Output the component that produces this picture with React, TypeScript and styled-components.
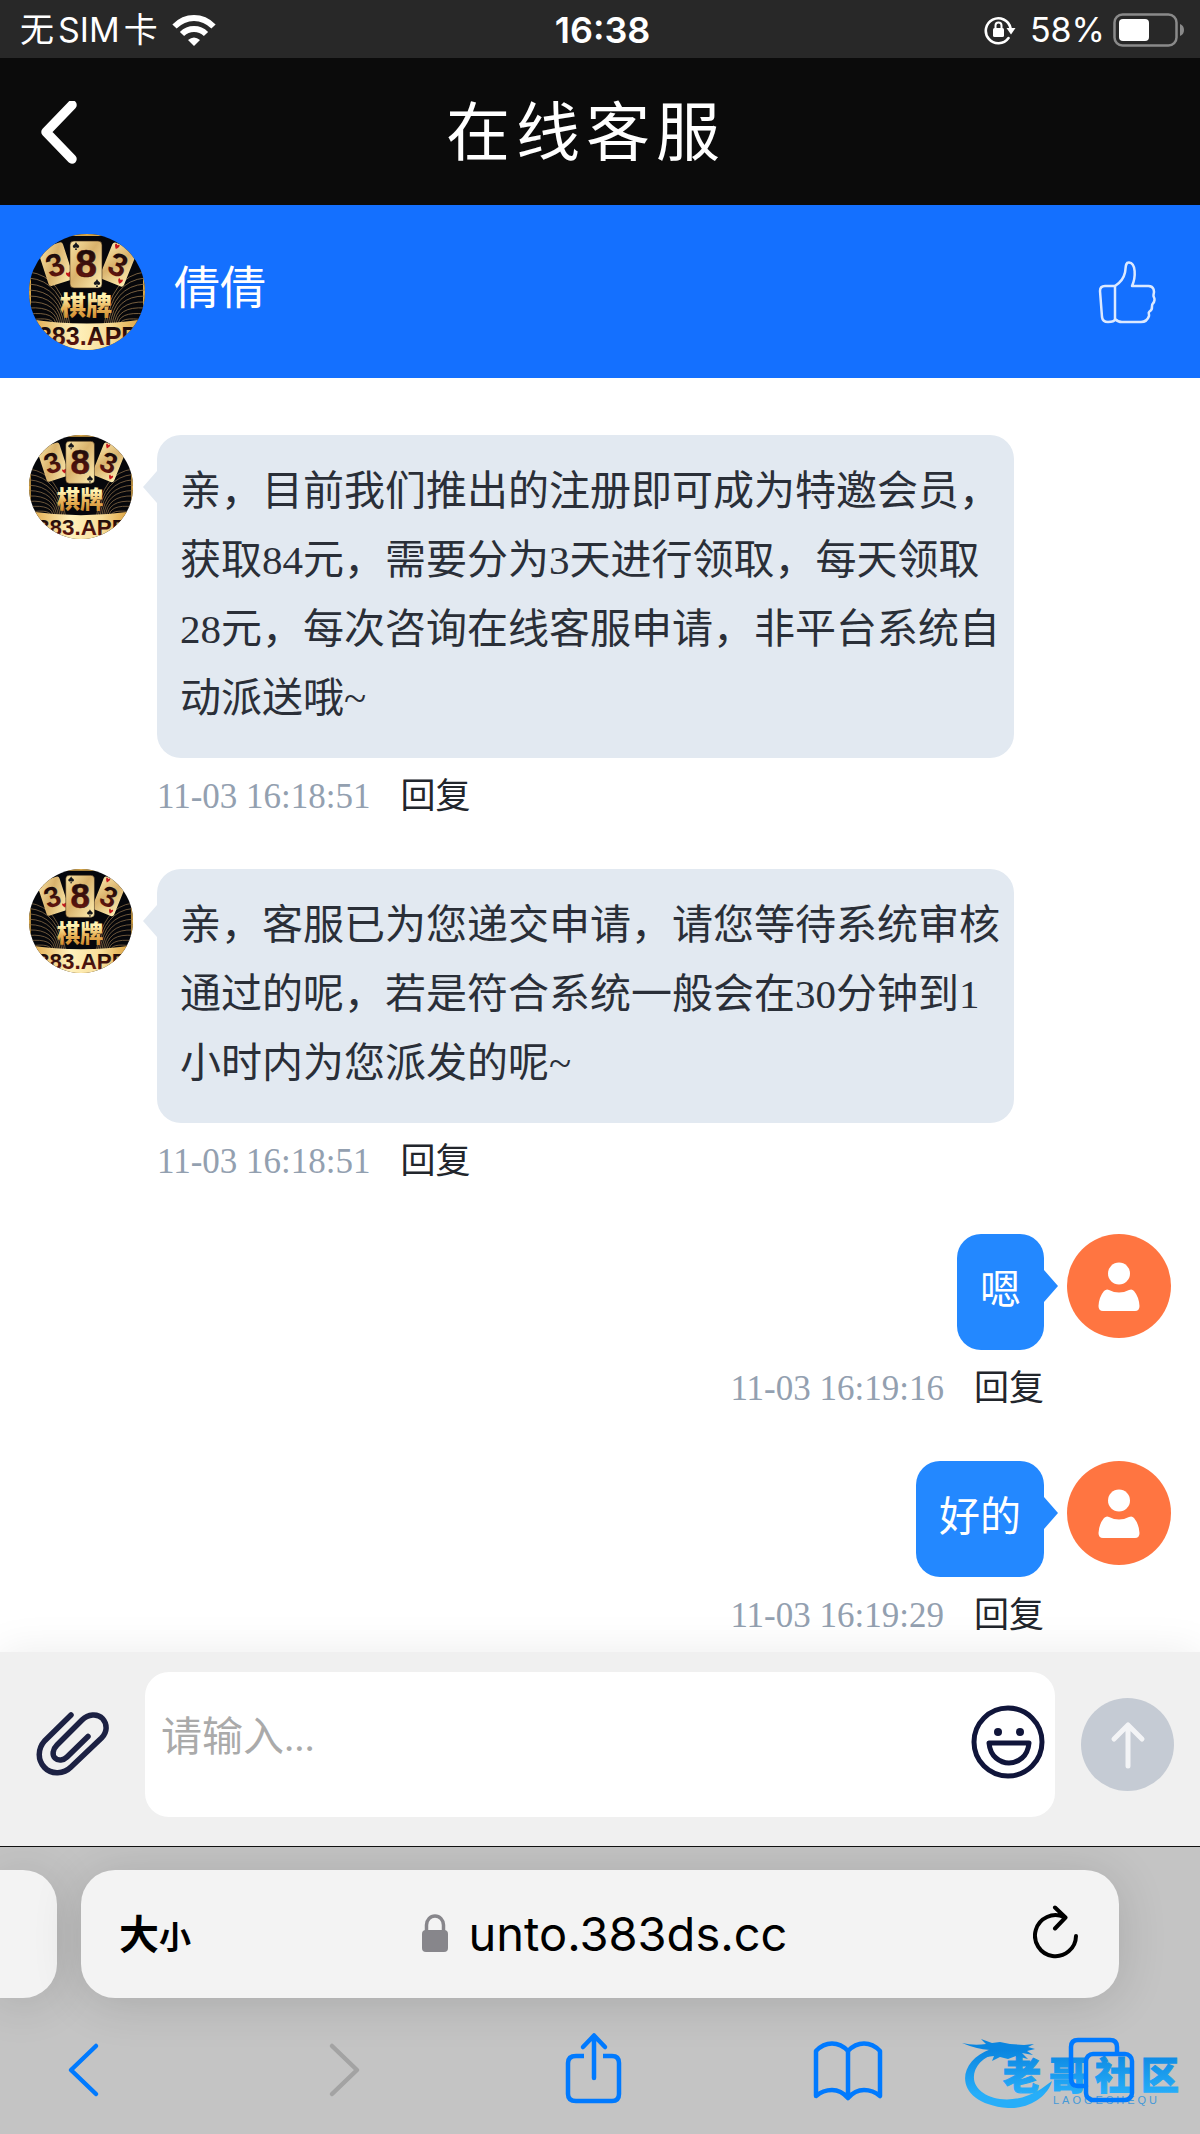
import React from "react";
import styled, { createGlobalStyle } from "styled-components";

const uiFont = `Inter, "Noto Sans CJK SC", sans-serif`;
const pageFont = `"Liberation Serif", "Noto Sans CJK SC", serif`;

const GlobalStyle = createGlobalStyle`
  *, *::before, *::after { box-sizing: border-box; }
  body { margin: 0; background: #fff; }
  button, textarea { font: inherit; color: inherit; }
`;

const Page = styled.div`
  display: flex;
  flex-direction: column;
  min-height: 100vh;
  background: #fff;
  font-family: ${pageFont};
`;

const IconButton = styled.button`
  display: flex;
  align-items: center;
  justify-content: center;
  flex: none;
  padding: 0;
  border: 0;
  background: none;
  cursor: pointer;
`;

const Icon = styled.svg`
  display: block;
  flex: none;
  fill: none;
  stroke: currentColor;
  stroke-linecap: round;
  stroke-linejoin: round;
`;

/* Status bar */

const StatusBar = styled.div`
  display: grid;
  grid-template-columns: 1fr auto 1fr;
  align-items: center;
  height: 58px;
  padding: 2px 15px 0 20px;
  background: #282828;
  color: #fff;
  font-family: ${uiFont};
  font-size: 34px;
  line-height: 40px;
`;

const StatusGroup = styled.div<{ $end?: boolean }>`
  display: flex;
  align-items: center;
  justify-content: ${(p) => (p.$end ? "flex-end" : "flex-start")};
  gap: ${(p) => (p.$end ? 8 : 14)}px;
`;

const Carrier = styled.span`
  display: flex;
  gap: 4px;
`;

const Clock = styled.time`
  font-size: 36px;
  font-weight: 600;
`;

const Percent = styled.span`
  margin-left: 6px;
`;

/* Title bar */

const TitleBar = styled.header`
  display: grid;
  grid-template-columns: 80px 1fr 128px;
  align-items: center;
  height: 147px;
  padding: 4px 0 0 20px;
  background: #0b0b0b;
  color: #fff;
`;

const Title = styled.h1`
  margin: 0;
  font-size: 64px;
  font-weight: 400;
  line-height: 80px;
  letter-spacing: 6px;
  text-align: center;
`;

/* Agent bar */

const AgentBar = styled.section`
  display: flex;
  align-items: center;
  gap: 29px;
  height: 173px;
  padding: 0 44px 0 29px;
  background: #1470ff;
  color: #fff;
`;

const AgentName = styled.h2`
  flex: 1;
  margin: 0;
  padding-bottom: 6px;
  font-size: 46px;
  font-weight: 400;
  line-height: 60px;
`;

/* Messages */

const Chat = styled.main`
  display: flex;
  flex: 1;
  flex-direction: column;
  gap: 36px;
  padding: 57px 29px 0;
`;

const Row = styled.article<{ $mine: boolean }>`
  display: flex;
  flex-direction: ${(p) => (p.$mine ? "row-reverse" : "row")};
  align-items: flex-start;
  gap: ${(p) => (p.$mine ? 23 : 24)}px;
`;

const Column = styled.div<{ $mine: boolean }>`
  display: flex;
  flex-direction: column;
  align-items: ${(p) => (p.$mine ? "flex-end" : "flex-start")};
`;

const Bubble = styled.p<{ $mine: boolean }>`
  position: relative;
  max-width: 857px;
  margin: 0;
  padding: ${(p) => (p.$mine ? "22px 23px 25px" : "22px 14px 25px 23px")};
  border-radius: 24px;
  background: ${(p) => (p.$mine ? "#2388ff" : "#e2e9f1")};
  color: ${(p) => (p.$mine ? "#fff" : "#2a2f38")};
  font-size: 41px;
  line-height: 69px;

  &::after {
    content: "";
    position: absolute;
    top: 36px;
    ${(p) => (p.$mine ? "left: 100%;" : "right: 100%;")}
    border: 16px solid transparent;
    border-width: 16px 14px;
    ${(p) =>
      p.$mine
        ? "border-left-color: #2388ff; border-right-width: 0;"
        : "border-right-color: #e2e9f1; border-left-width: 0;"}
  }
`;

const Meta = styled.footer`
  display: flex;
  align-items: center;
  gap: 30px;
  height: 75px;
  padding-top: 3px;
  font-size: 35px;
  line-height: 48px;
`;

const Stamp = styled.time`
  color: #93a0b0;
`;

const Reply = styled.button`
  padding: 0;
  border: 0;
  background: none;
  color: #22262c;
  cursor: pointer;
`;

/* Composer */

const Composer = styled.form`
  display: flex;
  align-items: center;
  gap: 26px;
  padding: 20px 26px 29px 29px;
  background: #f0f0f0;
  box-shadow: 0 0 40px rgba(0, 0, 0, 0.08);
`;

const Field = styled.div`
  display: flex;
  flex: 1;
  align-items: center;
  min-width: 0;
  height: 145px;
  padding: 0 10px 6px 16px;
  border-radius: 24px;
  background: #fff;
`;

const Input = styled.textarea`
  flex: 1;
  min-width: 0;
  height: 70px;
  padding: 0;
  border: 0;
  outline: 0;
  resize: none;
  overflow: hidden;
  background: none;
  color: #2a2f38;
  font-size: 41px;
  line-height: 60px;

  &::placeholder {
    color: #aaa;
    opacity: 1;
  }
`;

const SendButton = styled(IconButton)`
  width: 93px;
  height: 93px;
  border-radius: 50%;
  background: #c5cbd4;
  color: #f3f4f6;
`;

/* Browser chrome */

const Browser = styled.footer`
  border-top: 1px solid #111;
  padding-top: 23px;
  background: #c4c4c4;
  font-family: ${uiFont};
  overflow: hidden;
`;

const AddressRow = styled.div`
  display: flex;
  gap: 24px;
  padding-right: 81px;
`;

const TabEdge = styled.div`
  width: 57px;
  height: 128px;
  border-radius: 0 34px 34px 0;
  background: #f3f3f3;
  box-shadow: 0 4px 50px rgba(0, 0, 0, 0.14);
`;

const AddressBar = styled.div`
  display: grid;
  flex: 1;
  grid-template-columns: 1fr auto 1fr;
  align-items: center;
  height: 128px;
  padding: 0 40px 0 38px;
  border-radius: 34px;
  background: #f3f3f3;
  box-shadow: 0 4px 50px rgba(0, 0, 0, 0.14);
  color: #000;
`;

const TextSize = styled.button`
  justify-self: start;
  padding: 4px 0 0;
  border: 0;
  background: none;
  font-size: 40px;
  font-weight: 700;
  line-height: 60px;
  cursor: pointer;
`;

const Small = styled.span`
  font-size: 32px;
`;

const Address = styled.a`
  display: flex;
  align-items: center;
  gap: 20px;
  padding-left: 10px;
  color: #000;
  font-size: 47px;
  line-height: 64px;
  text-decoration: none;
`;

const Reload = styled(IconButton)`
  justify-self: end;
`;

const Toolbar = styled.nav`
  position: relative;
  display: flex;
  align-items: center;
  justify-content: space-between;
  height: 136px;
  padding: 8px 63px 0 47px;
  color: #007aff;
`;

const ToolButton = styled(IconButton)`
  position: relative;
  width: 72px;
  height: 76px;
  z-index: 1;

  &:disabled {
    color: #a3a3a3;
  }
`;

const Watermark = styled.svg`
  position: absolute;
  right: 12px;
  bottom: 20px;
`;

function LogoAvatar({ size, id }: { size: number; id: string }) {
  const rings = [0, 1, 2, 3, 4, 5, 6, 7, 8];
  return (
    <svg width={size} height={size} viewBox="0 0 116 116" role="img" aria-label="383棋牌" style={{ flex: "none" }}>
      <defs>
        <clipPath id={`${id}-clip`}>
          <circle cx="58" cy="58" r="58" />
        </clipPath>
        <linearGradient id={`${id}-card`} x1="0" y1="0" x2="1" y2="1">
          <stop offset="0" stopColor="#f8e3a4" />
          <stop offset="0.45" stopColor="#d9b26c" />
          <stop offset="1" stopColor="#fff0b4" />
        </linearGradient>
        <linearGradient id={`${id}-gold`} x1="0" y1="0" x2="0" y2="1">
          <stop offset="0.2" stopColor="#fff3b0" />
          <stop offset="0.55" stopColor="#e9b45a" />
          <stop offset="1" stopColor="#c98324" />
        </linearGradient>
        <linearGradient id={`${id}-band`} x1="0" y1="0" x2="1" y2="0">
          <stop offset="0" stopColor="#e0a544" />
          <stop offset="0.4" stopColor="#fff1bd" />
          <stop offset="0.7" stopColor="#f7dc97" />
          <stop offset="1" stopColor="#d99a33" />
        </linearGradient>
        <linearGradient id={`${id}-ink`} x1="0" y1="0" x2="0" y2="1">
          <stop offset="0.2" stopColor="#1b0b0a" />
          <stop offset="0.9" stopColor="#6a160f" />
        </linearGradient>
      </defs>
      <g clipPath={`url(#${id}-clip)`} fontFamily={`"Liberation Sans", "Noto Sans CJK SC", sans-serif`} fontWeight="700" textAnchor="middle">
        <rect width="116" height="116" fill="#06070b" />
        <rect x="1" y="1" width="114" height="114" rx="10" fill="none" stroke="#d9a84a" strokeWidth="2" />
        <g fill="none" stroke="#94764e" strokeWidth="0.8">
          {rings.map((n) => (
            <React.Fragment key={n}>
              <path d={`M0 ${38 + n * 6} Q${34 - n} ${42 + n * 5} ${41 - n * 2} 92`} />
              <path d={`M116 ${38 + n * 6} Q${82 + n} ${42 + n * 5} ${75 + n * 2} 92`} />
            </React.Fragment>
          ))}
        </g>
        <g transform="translate(26 31) rotate(-18)">
          <rect x="-12" y="-20" width="26" height="39" rx="3" fill={`url(#${id}-card)`} />
          <text y="11" fontSize="32" fill={`url(#${id}-ink)`}>3</text>
          <path d="M10 12c-2-3-4 0 0 4c4-4 2-7 0-4M-9-17c-2-3-4 0 0 4c4-4 2-7 0-4" fill="#c5161c" />
        </g>
        <g transform="translate(89 31) rotate(22)">
          <rect x="-13" y="-20" width="26" height="39" rx="3" fill={`url(#${id}-card)`} />
          <text y="11" fontSize="32" fill={`url(#${id}-ink)`}>3</text>
          <path d="M8 13c-2-3-4 0 0 4c4-4 2-7 0-4M-8-18c-2-3-4 0 0 4c4-4 2-7 0-4" fill="#c5161c" />
        </g>
        <rect x="41" y="7" width="32" height="47" rx="4" fill={`url(#${id}-card)`} stroke="#3a2614" strokeWidth="0.6" />
        <text x="57" y="43" fontSize="39" fill={`url(#${id}-ink)`} stroke="#3a0f0c" strokeWidth="0.6">8</text>
        <path d="M47 8c-1 3-4 3-3 5c1 2 3 0 3 0l-1 3h2l-1-3s2 2 3 0c1-2-2-2-3-5M68 45c-1 3-4 3-3 5c1 2 3 0 3 0l-1 3h2l-1-3s2 2 3 0c1-2-2-2-3-5" fill="#14161c" />
        <text x="57" y="81" fontSize="26" fontWeight="900" fill={`url(#${id}-gold)`}>棋牌</text>
        <path d="M0 85Q58 94 116 85V116H0Z" fill={`url(#${id}-band)`} />
        <text x="59" y="111" fontSize="25" fill={`url(#${id}-ink)`}>383.APP</text>
      </g>
    </svg>
  );
}

function UserAvatar() {
  return (
    <svg width="104" height="104" viewBox="0 0 104 104" role="img" aria-label="我" style={{ flex: "none" }}>
      <circle cx="52" cy="52" r="52" fill="#ff7541" />
      <circle cx="52" cy="39.5" r="11" fill="#fff" />
      <path d="M37 57q2.500-2.500 5-1q10 5 20 0q3-1.500 5 1q5 6 5.500 15q0 5-4.500 5h-32q-4.500 0-4.500-5q.5-9 5.500-15Z" fill="#fff" />
    </svg>
  );
}

type Message = { mine: boolean; text: string; time: string };

const messages: Message[] = [
  {
    mine: false,
    text: "亲，目前我们推出的注册即可成为特邀会员，获取84元，需要分为3天进行领取，每天领取28元，每次咨询在线客服申请，非平台系统自动派送哦~",
    time: "11-03 16:18:51",
  },
  {
    mine: false,
    text: "亲，客服已为您递交申请，请您等待系统审核通过的呢，若是符合系统一般会在30分钟到1小时内为您派发的呢~",
    time: "11-03 16:18:51",
  },
  { mine: true, text: "嗯", time: "11-03 16:19:16" },
  { mine: true, text: "好的", time: "11-03 16:19:29" },
];

export default function App() {
  return (
    <Page lang="zh-CN">
      <GlobalStyle />

      <StatusBar>
        <StatusGroup>
          <Carrier>
            <span>无</span>
            <span>SIM</span>
            <span>卡</span>
          </Carrier>
          <Icon width="44" height="32" viewBox="0 0 44 32" strokeWidth="6" style={{ strokeLinecap: "butt" }}>
            <path d="M2.500 12.500Q11 4 22 4T41.500 12.500" />
            <path d="M10 20Q15 15 22 15T34 20" />
            <path d="M22 32l-6-6q6-5 12 0Z" fill="currentColor" stroke="none" />
          </Icon>
        </StatusGroup>
        <Clock>16:38</Clock>
        <StatusGroup $end>
          <Icon width="32" height="30" viewBox="0 0 32 30" strokeWidth="2.6">
            <path d="M24.500 23A12.500 12.500 0 1 1 26.500 13" />
            <path d="M22.500 13h9l-4.500 6.500Z" fill="currentColor" stroke="none" />
            <rect x="9" y="13" width="11" height="9" rx="1.500" fill="currentColor" stroke="none" />
            <path d="M11.500 13v-2.500a3 3 0 0 1 6 0V13" strokeWidth="2" />
          </Icon>
          <Percent>58%</Percent>
          <Icon width="72" height="34" viewBox="0 0 72 34">
            <rect x="1.500" y="1.500" width="62" height="31" rx="8" stroke="#8a8a8a" strokeWidth="2.500" />
            <rect x="6" y="6" width="30" height="22" rx="4" fill="#fff" stroke="none" />
            <path d="M67 11q4 1.500 4 6t-4 6Z" fill="#8a8a8a" stroke="none" />
          </Icon>
        </StatusGroup>
      </StatusBar>

      <TitleBar>
        <IconButton type="button" aria-label="返回">
          <Icon width="40" height="66" viewBox="0 0 40 66" strokeWidth="9.500">
            <path d="M32 4L6 31L32 58" />
          </Icon>
        </IconButton>
        <Title>在线客服</Title>
      </TitleBar>

      <AgentBar>
        <LogoAvatar size={116} id="agent" />
        <AgentName>倩倩</AgentName>
        <IconButton type="button" aria-label="点赞">
          <Icon width="58" height="66" viewBox="0 0 58 66" strokeWidth="2.5" opacity="0.85">
            <path d="M17 27H7Q2 27 2 32L4 58q.6 5 6 5q6 0 7-2.500" />
            <path d="M17 27V60q3 3 7 3H43q6 0 8-6c.6-2-1.500-3 .5-4.500c3-1.500 2.500-4 2.500-5.500c0-3 2-2 2.500-6c.3-3-1.500-3-1-5c1-3 1-9-5-9H34c4-9 4-23-3-23.500c-4-.3-3 5-4 10c-1.500 7-6 11-10 13.500Z" />
          </Icon>
        </IconButton>
      </AgentBar>

      <Chat>
        {messages.map((m, i) => (
          <Row key={i} $mine={m.mine}>
            {m.mine ? <UserAvatar /> : <LogoAvatar size={104} id={`message-${i}`} />}
            <Column $mine={m.mine}>
              <Bubble $mine={m.mine}>{m.text}</Bubble>
              <Meta>
                <Stamp>{m.time}</Stamp>
                <Reply type="button">回复</Reply>
              </Meta>
            </Column>
          </Row>
        ))}
      </Chat>

      <Composer onSubmit={(e) => e.preventDefault()}>
        <IconButton type="button" aria-label="附件">
          <Icon width="90" height="80" viewBox="0 0 90 80" strokeWidth="5.500" color="#1c2143">
            <path d="M42 10L15.500 36C8.500 44 8.500 55 15.500 62.500S35 69 42 62L72.500 33C78.500 27 78.500 19 73.500 13.500S59 9 53 15L28 40C23.500 44.500 23 50 26 53S34.500 55.500 38 52L59 31.500" />
          </Icon>
        </IconButton>
        <Field>
          <Input aria-label="消息" placeholder="请输入..." rows={1} />
          <IconButton type="button" aria-label="表情">
            <Icon width="74" height="74" viewBox="0 0 74 74" strokeWidth="5" color="#10153a">
              <circle cx="37" cy="37" r="34" />
              <circle cx="27" cy="27" r="4" fill="currentColor" stroke="none" />
              <circle cx="49" cy="27" r="4" fill="currentColor" stroke="none" />
              <path d="M18 38H58Q57 48 51 53Q45 58 38 58T25 53Q19 48 18 38Z" />
            </Icon>
          </IconButton>
        </Field>
        <SendButton type="submit" aria-label="发送">
          <Icon width="36" height="50" viewBox="0 0 36 50" strokeWidth="5">
            <path d="M18 46V5M4 19L18 5L32 19" />
          </Icon>
        </SendButton>
      </Composer>

      <Browser>
        <AddressRow>
          <TabEdge />
          <AddressBar>
            <TextSize type="button">
              大<Small>小</Small>
            </TextSize>
            <Address href="#">
              <Icon width="28" height="40" viewBox="0 0 28 40" strokeWidth="3.500" color="#87868b">
                <path d="M5.500 18V11a8.500 9 0 0 1 17 0v7" />
                <rect x="1" y="16" width="26" height="22" rx="4" fill="currentColor" stroke="none" />
              </Icon>
              unto.383ds.cc
            </Address>
            <Reload type="button" aria-label="刷新">
              <Icon width="46" height="58" viewBox="0 0 46 58" strokeWidth="4">
                <path d="M43 31A20.500 20.500 0 1 1 31 12M22 2.500L32.500 12.500L22 23.500" />
              </Icon>
            </Reload>
          </AddressBar>
        </AddressRow>
        <Toolbar>
          <ToolButton type="button" aria-label="后退">
            <Icon width="72" height="76" viewBox="0 0 72 76" strokeWidth="4.500">
              <path d="M49 14L24 38L49 62" />
            </Icon>
          </ToolButton>
          <ToolButton type="button" aria-label="前进" disabled>
            <Icon width="72" height="76" viewBox="0 0 72 76" strokeWidth="4.500">
              <path d="M30 14L55 38L30 62" />
            </Icon>
          </ToolButton>
          <ToolButton type="button" aria-label="分享">
            <Icon width="72" height="76" viewBox="0 0 72 76" strokeWidth="4.500">
              <path d="M28 24H20Q12 24 12 31V62Q12 69 20 69H56Q63 69 63 62V31Q63 24 56 24H47" style={{ strokeLinecap: "butt" }} />
              <path d="M38 46V4M27 15L38 3.500L49 15" />
            </Icon>
          </ToolButton>
          <ToolButton type="button" aria-label="书签">
            <Icon width="72" height="76" viewBox="0 0 72 76" strokeWidth="4.500">
              <path d="M37 19Q30 11.500 21 11.500T5 19V64Q12 58 21 58T37 66Q44 58 53 58T69 64V19Q62 11.500 53 11.500T37 19V66" />
            </Icon>
          </ToolButton>
          <ToolButton type="button" aria-label="标签页">
            <Icon width="72" height="76" viewBox="0 0 72 76" strokeWidth="4.500">
              <path d="M21 54H13Q6 54 6 47V15Q6 8 13 8H45Q52 8 52 15V21" />
              <rect x="21" y="22" width="46" height="46" rx="7" />
            </Icon>
          </ToolButton>
          <Watermark width="230" height="80" viewBox="0 0 230 80" role="img" aria-label="老哥社区">
            <defs>
              <linearGradient id="mark" x1="0" y1="0" x2="0" y2="80" gradientUnits="userSpaceOnUse">
                <stop offset="0.2" stopColor="#0b86e0" />
                <stop offset="0.75" stopColor="#27aef9" />
              </linearGradient>
            </defs>
            <g fill="url(#mark)">
              <path d="M33 15C-4 28-4 70 50 74C72 75 90 62 94 47L83 55C50 76 14 62 16 42C17 30 28 21 42 19Z" />
              <path d="M4 9Q16 12 28 10L23 5L34 9L42 8L52 10L66 11L76 10L70 13L77 15L69 17L75 21L64 19L70 25L58 22L50 25L42 23L34 27L36 22L28 23L32 16Q18 15 4 9Z" />
              <text x="45" y="55" fontFamily="Noto Sans CJK SC, sans-serif" fontSize="38" fontWeight="900" letterSpacing="8" stroke="url(#mark)" strokeWidth="1">
                老哥社区
              </text>
            </g>
            <text x="95" y="70" fill="#4599d8" fontFamily="Liberation Sans, sans-serif" fontSize="11" letterSpacing="3">
              LAOGESHEQU
            </text>
          </Watermark>
        </Toolbar>
      </Browser>
    </Page>
  );
}
